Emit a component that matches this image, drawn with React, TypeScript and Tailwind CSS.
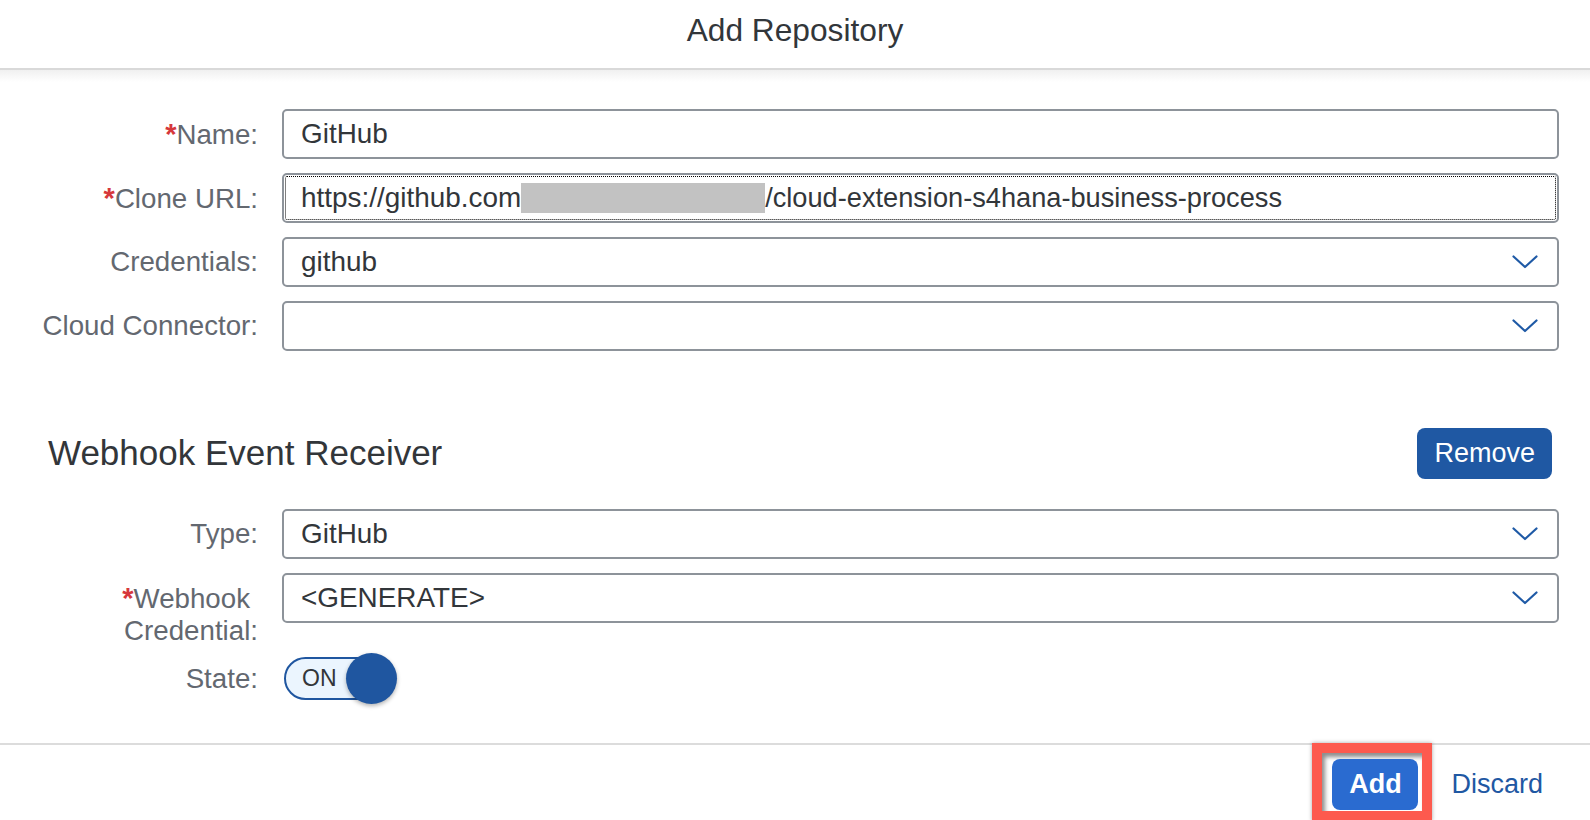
import React from "react";

const Chevron = () => (
  <svg width="26" height="14" viewBox="0 0 26 14" fill="none">
    <polyline points="1.5,1.5 13,12 24.5,1.5" stroke="#1f5aa6" strokeWidth="2.2" strokeLinecap="round" strokeLinejoin="round" />
  </svg>
);

const Req = () => <span className="text-[#d6383b] font-bold text-[29px]">*</span>;

function Label({ children }: { children: React.ReactNode }) {
  return (
    <div className="text-right text-[27.7px] leading-[32px] pt-[9px] text-[#636870] whitespace-nowrap">
      {children}
    </div>
  );
}

function Box({ children, select, focus }: { children?: React.ReactNode; select?: boolean; focus?: boolean }) {
  return (
    <div
      className={
        "h-[50px] rounded-[5px] border-2 border-[#8d939a] bg-white flex items-center pl-[17px] pr-[19px] text-[27.9px] text-[#32363a] whitespace-nowrap overflow-hidden " +
        (focus ? "outline-1 outline-dotted outline-black outline-offset-[-4px]" : "")
      }
    >
      <div className="flex-1 flex items-center">{children}</div>
      {select && <Chevron />}
    </div>
  );
}

export default function App() {
  return (
    <div
      className="w-full h-[820px] overflow-hidden bg-white flex flex-col"
      style={{ fontFamily: '"Liberation Sans", Arial, sans-serif' }}
    >
      {/* Header */}
      <div className="h-[70px] shrink-0 border-b-2 border-[#d9d9d9] flex items-center justify-center pb-[6px]">
        <span className="text-[31.7px] text-[#32363a]">Add Repository</span>
      </div>
      <div className="h-[12px] shrink-0 bg-gradient-to-b from-[#f0f0f0] to-white" />

      {/* Form */}
      <div className="pt-[27px] pr-[31px] flex flex-col gap-[14px]">
        <div className="grid grid-cols-[258px_1fr] gap-x-[24px]">
          <Label>
            <Req />Name:
          </Label>
          <Box>GitHub</Box>
        </div>
        <div className="grid grid-cols-[258px_1fr] gap-x-[24px]">
          <Label>
            <Req />Clone URL:
          </Label>
          <Box focus>
            <span>https://github.com</span>
            <span className="inline-block w-[244px] h-[30px] bg-[#c2c2c2]" />
            <span className="text-[27.2px]">/cloud-extension-s4hana-business-process</span>
          </Box>
        </div>
        <div className="grid grid-cols-[258px_1fr] gap-x-[24px]">
          <Label>Credentials:</Label>
          <Box select>github</Box>
        </div>
        <div className="grid grid-cols-[258px_1fr] gap-x-[24px]">
          <Label>Cloud Connector:</Label>
          <Box select />
        </div>
      </div>

      {/* Webhook section */}
      <div className="mt-[77px] h-[51px] flex items-center justify-between pl-[48px] pr-[38px]">
        <span className="text-[35px] text-[#32363a]">Webhook Event Receiver</span>
        <button className="h-[51px] px-[17px] rounded-[8px] bg-[#1f58a3] text-white text-[27px]">Remove</button>
      </div>

      <div className="mt-[30px] pr-[31px] flex flex-col">
        <div className="grid grid-cols-[258px_1fr] gap-x-[24px]">
          <Label>Type:</Label>
          <Box select>GitHub</Box>
        </div>
        <div className="mt-[14px] grid grid-cols-[258px_1fr] gap-x-[24px]">
          <div className="text-right text-[27.7px] leading-[32px] pt-[9px] text-[#636870] whitespace-nowrap">
            <div className="pr-[8px]">
              <Req />Webhook
            </div>
            <div>Credential:</div>
          </div>
          <div>
            <Box select>&lt;GENERATE&gt;</Box>
          </div>
        </div>
        <div className="mt-[6px] grid grid-cols-[258px_1fr] gap-x-[24px]">
          <div className="text-right text-[27.7px] leading-[32px] pt-[10px] text-[#636870]">State:</div>
          <div className="relative w-[113px] h-[51px] ml-[2px]">
            <div className="absolute left-0 top-[4px] h-[43px] w-[100px] rounded-full border-2 border-[#1f56a0] bg-[#ebf5fe] flex items-center pl-[16px]">
              <span className="text-[23px] text-[#32363a]">ON</span>
            </div>
            <div className="absolute right-0 top-0 w-[51px] h-[51px] rounded-full bg-[#1f56a0] shadow-[0_2px_4px_rgba(0,0,0,0.3)]" />
          </div>
        </div>
      </div>

      {/* Footer */}
      <div className="mt-[39px] border-t-2 border-[#dcdcdc] flex-1">
        <div className="flex justify-end items-center pr-[47px] -mt-[2px]">
          <div className="w-[120px] h-[78px] border-[10px] border-[#fd5a4e] bg-white pt-[6px] pl-[10px] shadow-[inset_3px_4px_4px_rgba(0,0,0,0.45),0_0_4px_rgba(0,0,0,0.35)]">
            <button className="w-[86px] h-[51px] rounded-[8px] bg-[#2a6bd0] text-white text-[27px] font-bold">Add</button>
          </div>
          <span className="ml-[19px] pt-[4px] text-[27px] text-[#1f58a3]">Discard</span>
        </div>
      </div>
    </div>
  );
}
